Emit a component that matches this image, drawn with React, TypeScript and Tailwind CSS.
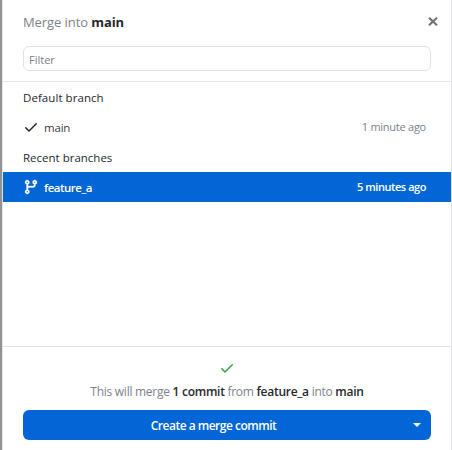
import React from 'react';

const CheckIcon = ({ className }: { className: string }) => (
  <svg className={className} viewBox="0 0 16 16" fill="currentColor">
    <path fillRule="evenodd" d="M13.78 4.22a.75.75 0 0 1 0 1.06l-7.25 7.25a.75.75 0 0 1-1.06 0L2.22 9.28a.75.75 0 0 1 1.06-1.06L6 10.94l6.72-6.72a.75.75 0 0 1 1.06 0Z" />
  </svg>
);

const BranchIcon = () => (
  <svg className="h-4 w-4" viewBox="0 0 16 16" fill="currentColor" stroke="currentColor" strokeWidth="0.3">
    <path fillRule="evenodd" d="M11.75 2.5a.75.75 0 1 0 0 1.5.75.75 0 0 0 0-1.5Zm-2.25.75a2.25 2.25 0 1 1 3 2.122V6A2.5 2.5 0 0 1 10 8.5H6a1 1 0 0 0-1 1v1.128a2.251 2.251 0 1 1-1.5 0V5.372a2.25 2.25 0 1 1 1.5 0v1.836A2.492 2.492 0 0 1 6 7h4a1 1 0 0 0 1-1v-.628A2.25 2.25 0 0 1 9.5 3.25ZM4.25 12a.75.75 0 1 0 0 1.5.75.75 0 0 0 0-1.5ZM3.5 3.25a.75.75 0 1 1 1.5 0 .75.75 0 0 1-1.5 0Z" />
  </svg>
);

const CloseIcon = () => (
  <svg className="h-[9px] w-[10px] text-[#6a737d]" viewBox="0 0 10 9" fill="none" stroke="currentColor" strokeWidth="2">
    <path d="M1 .7 9 8.3M9 .7 1 8.3" />
  </svg>
);

export default function App() {
  return (
    <div className="flex h-[450px] w-[452px] overflow-hidden border-r border-[#e1e4e8] bg-white font-['Open_Sans','Noto_Sans',sans-serif] text-xs text-[#24292e]">
      <div className="w-[3px] shrink-0 border-r border-[#e4e4ec] bg-[#919196]" />
      <div className="flex min-w-0 flex-1 flex-col whitespace-nowrap">
        <header className="h-[82px] border-b border-[#e1e4e8] px-5 pt-3">
          <div className="flex h-5 items-center justify-between">
            <h1 className="text-[13px] leading-5 tracking-[-0.08px] text-[#7b828b]">
              Merge into <strong className="font-bold text-[#24292e]">main</strong>
            </h1>
            <button className="-mr-[7px] -mt-0.5" aria-label="Close"><CloseIcon /></button>
          </div>
          <div className="mt-3.5 flex h-[25px] items-center rounded-md border border-[#e1e1e8] pl-[5px] pt-[3px] text-[11px] text-[#7b828b]">Filter</div>
        </header>
        <main className="h-[264px]">
          <h2 className="flex h-[30px] items-center pl-5 pt-0.5 text-[11.5px] font-medium tracking-[0.06px]">Default branch</h2>
          <div className="flex h-[30px] items-center pl-5 pr-[25px]">
            <CheckIcon className="h-4 w-4" />
            <span className="ml-[5px] flex-1 pt-0.5 text-[11.5px] tracking-[-0.2px] text-[#3a3f44]">main</span>
            <span className="text-[11px] tracking-[-0.25px] text-[#7b828b]">1 minute ago</span>
          </div>
          <h2 className="flex h-[30px] items-center pl-5 pt-0.5 text-[11.5px] font-medium">Recent branches</h2>
          <div className="flex h-[30px] items-center bg-[#0366d6] pl-5 pr-[25px] text-white">
            <BranchIcon />
            <span className="ml-[5px] flex-1 pt-0.5 text-[11.5px] font-semibold tracking-[-0.5px]">feature_a</span>
            <span className="text-[11px] font-semibold tracking-[-0.45px]">5 minutes ago</span>
          </div>
        </main>
        <footer className="flex flex-1 flex-col border-t border-[#e1e1e8] px-5">
          <div className="mt-[13px] flex justify-center text-[#28a745]"><CheckIcon className="h-4 w-4" /></div>
          <p className="mt-[7px] h-[18px] text-center text-[12px] leading-[18px] tracking-[-0.27px] text-[#7b828b]">
            This will merge <strong className="font-semibold text-[#24292e]">1 commit</strong> from <strong className="font-semibold text-[#24292e]">feature_a</strong> into <strong className="font-semibold text-[#24292e]">main</strong>
          </p>
          <button className="mt-[9px] flex h-[30px] items-center rounded-md bg-[#0366d6] text-[12px] font-semibold tracking-[-0.5px] text-white">
            <span className="-mr-[28px] flex-1 pt-0.5 pr-[27px] text-center">Create a merge commit</span>
            <span className="flex w-[28px] justify-center">
              <svg className="h-1 w-[8px]" viewBox="0 0 8 4" fill="currentColor"><path d="M0 0H8L4 4Z" /></svg>
            </span>
          </button>
        </footer>
      </div>
    </div>
  );
}
